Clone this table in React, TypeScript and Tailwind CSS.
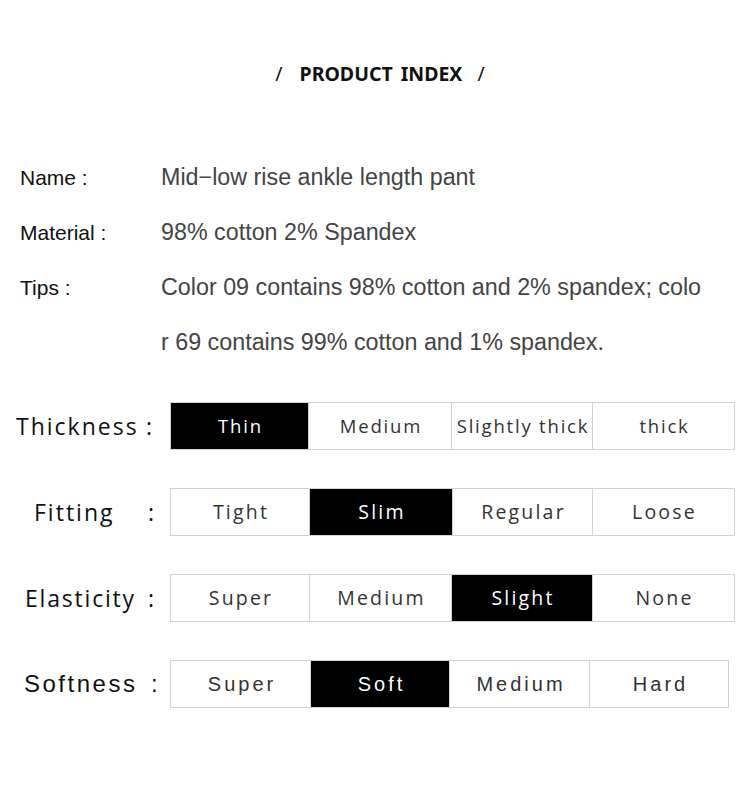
const info = [
  { label: "Name :", lines: ["Mid−low rise ankle length pant"] },
  { label: "Material :", lines: ["98% cotton 2% Spandex"] },
  {
    label: "Tips :",
    lines: [
      "Color 09 contains 98% cotton and 2% spandex; colo",
      "r 69 contains 99% cotton and 1% spandex.",
    ],
  },
];

type Row = {
  label: string;
  nameClass: string;
  labelText: string;
  cellText: string;
  active: number;
  cells: { text: string; w: string }[];
};

const rows: Row[] = [
  {
    label: "Thickness",
    nameClass: "w-[146px] pl-[16px]",
    labelText: "font-['Open_Sans',sans-serif] text-[23px] tracking-[2px]",
    cellText: "font-['Open_Sans',sans-serif] text-[18.5px] tracking-[1.8px] pl-[2px]",
    active: 0,
    cells: [
      { text: "Thin", w: "w-[139px]" },
      { text: "Medium", w: "w-[143px]" },
      { text: "Slightly thick", w: "w-[141px]" },
      { text: "thick", w: "w-[142px]" },
    ],
  },
  {
    label: "Fitting",
    nameClass: "w-[148px] pl-[34px]",
    labelText: "font-['Open_Sans',sans-serif] text-[23px] tracking-[2px]",
    cellText: "font-['Open_Sans',sans-serif] text-[19.5px] tracking-[2.2px] pl-[2px]",
    active: 1,
    cells: [
      { text: "Tight", w: "w-[140px]" },
      { text: "Slim", w: "w-[143px]" },
      { text: "Regular", w: "w-[140px]" },
      { text: "Loose", w: "w-[142px]" },
    ],
  },
  {
    label: "Elasticity",
    nameClass: "w-[148px] pl-[25px]",
    labelText: "font-['Open_Sans',sans-serif] text-[23px] tracking-[1.8px]",
    cellText: "font-['Open_Sans',sans-serif] text-[19.5px] tracking-[2.2px] pl-[2px]",
    active: 2,
    cells: [
      { text: "Super", w: "w-[140px]" },
      { text: "Medium", w: "w-[142px]" },
      { text: "Slight", w: "w-[141px]" },
      { text: "None", w: "w-[142px]" },
    ],
  },
  {
    label: "Softness",
    nameClass: "w-[151px] pl-[24px]",
    labelText: "font-['Liberation_Sans',sans-serif] text-[24px] tracking-[2.5px]",
    cellText: "font-['Liberation_Sans',sans-serif] text-[20px] tracking-[3px] pl-[3px]",
    active: 1,
    cells: [
      { text: "Super", w: "w-[141px]" },
      { text: "Soft", w: "w-[139px]" },
      { text: "Medium", w: "w-[140px]" },
      { text: "Hard", w: "w-[139px]" },
    ],
  },
];

export default function App() {
  return (
    <div className="w-[750px] h-[800px] bg-white text-[#111] font-['Liberation_Sans',sans-serif]">
      {/* title */}
      <div className="pt-[62px] h-[86px] flex justify-center">
        <div className="flex items-center leading-[24px] text-[19.5px] font-bold font-['Noto_Sans',sans-serif] text-[#111] pl-[10px]">
          <span className="font-normal">/</span>
          <span className="ml-[17px] [word-spacing:3px]">PRODUCT INDEX</span>
          <span className="ml-[15px] font-normal">/</span>
        </div>
      </div>

      {/* info */}
      <div className="mt-[64px] flex flex-col">
        {info.map((r) => (
          <div key={r.label} className="flex">
            <div className="w-[161px] pl-[20px] text-[21px] leading-[55px] text-[#111]">
              {r.label}
            </div>
            <div className="flex flex-col text-[23.3px] leading-[55px] text-[#444]">
              {r.lines.map((l) => (
                <div key={l}>{l}</div>
              ))}
            </div>
          </div>
        ))}
      </div>

      {/* index table */}
      <div className="mt-[32px] flex flex-col gap-[38px]">
        {rows.map((r) => (
          <div key={r.label} className="flex items-center">
            <div className={"w-[170px] flex items-center text-[#111] " + r.labelText}>
              <span className={"shrink-0 " + r.nameClass}>{r.label}</span>
              <span>:</span>
            </div>
            <div className="flex h-[48px]">
              {r.cells.map((c, i) => (
                <div
                  key={c.text}
                  className={
                    "flex items-center justify-center border-y border-r border-[#d2d2d2] " +
                    c.w +
                    " " +
                    r.cellText +
                    (i === 0 ? " border-l" : "") +
                    (i === r.active ? " bg-black text-white font-medium" : " text-[#333]")
                  }
                >
                  {c.text}
                </div>
              ))}
            </div>
          </div>
        ))}
      </div>
    </div>
  );
}
